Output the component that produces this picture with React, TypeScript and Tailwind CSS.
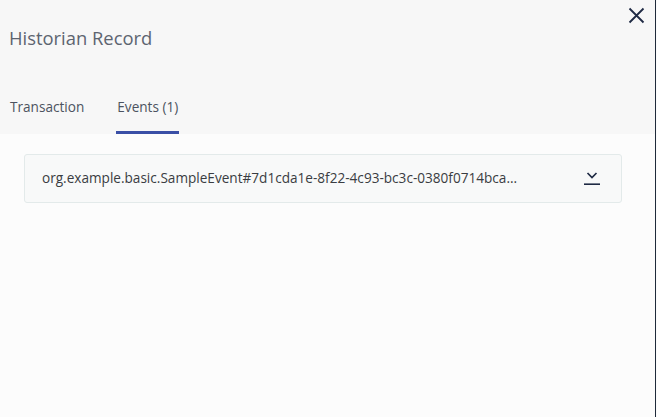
import React from 'react';

const font = { fontFamily: '"Open Sans", "Noto Sans", sans-serif' };

const CloseIcon = () => (
  <svg width="17" height="17" viewBox="0 0 17 17" className="text-[#1f2a44]">
    <path d="M1.5 1.5 L15.5 15.5 M15.5 1.5 L1.5 15.5" stroke="currentColor" strokeWidth="1.8" fill="none" />
  </svg>
);

const ExpandIcon = () => (
  <svg width="16" height="14" viewBox="0 0 16 14" className="text-[#1f2a44]">
    <path d="M3.5 1 L8 5.5 L12.5 1" stroke="currentColor" strokeWidth="1.7" fill="none" />
    <path d="M0 12.2 H16" stroke="currentColor" strokeWidth="1.6" />
  </svg>
);

export default function App() {
  const tabs = [
    { id: 'transaction', label: 'Transaction', active: false },
    { id: 'events', label: 'Events (1)', active: true },
  ];

  return (
    <div className="w-[657px] h-[417px] flex bg-[#fcfcfc] overflow-hidden" style={font}>
      <div className="w-[656px] h-full flex flex-col border-r border-[#1f2a3a]">
        <div className="h-[134px] bg-[#f7f7f7] flex flex-col relative">
          <h1 className="pl-[9px] pt-[25px] text-[18.4px] leading-[26px] text-[#5d6470] font-normal">
            Historian Record
          </h1>
          <button className="absolute top-[7px] right-[10px]">
            <CloseIcon />
          </button>
          <div className="mt-auto flex gap-[33px] pl-[10px]">
            {tabs.map((t) => (
              <div key={t.id} className="flex flex-col">
                <span className="text-[13.6px] leading-[18px] text-[#4c5360] pb-[15px]">
                  {t.label}
                </span>
                <div className={`h-[3px] -mx-[1px] ${t.active ? 'bg-[#3a4fa6]' : 'bg-transparent'}`} />
              </div>
            ))}
          </div>
        </div>
        <div className="flex-1 px-[24px] pt-[20px]">
          <div className="h-[49px] w-[598px] flex items-center justify-between bg-[#f8f9f9] border border-[#e3eaea] rounded-[3px] pl-[17px] pr-[21px]">
            <span className="text-[13.6px] text-[#3a3d42]">
              org.example.basic.SampleEvent#7d1cda1e-8f22-4c93-bc3c-0380f0714bca...
            </span>
            <ExpandIcon />
          </div>
        </div>
      </div>
    </div>
  );
}
